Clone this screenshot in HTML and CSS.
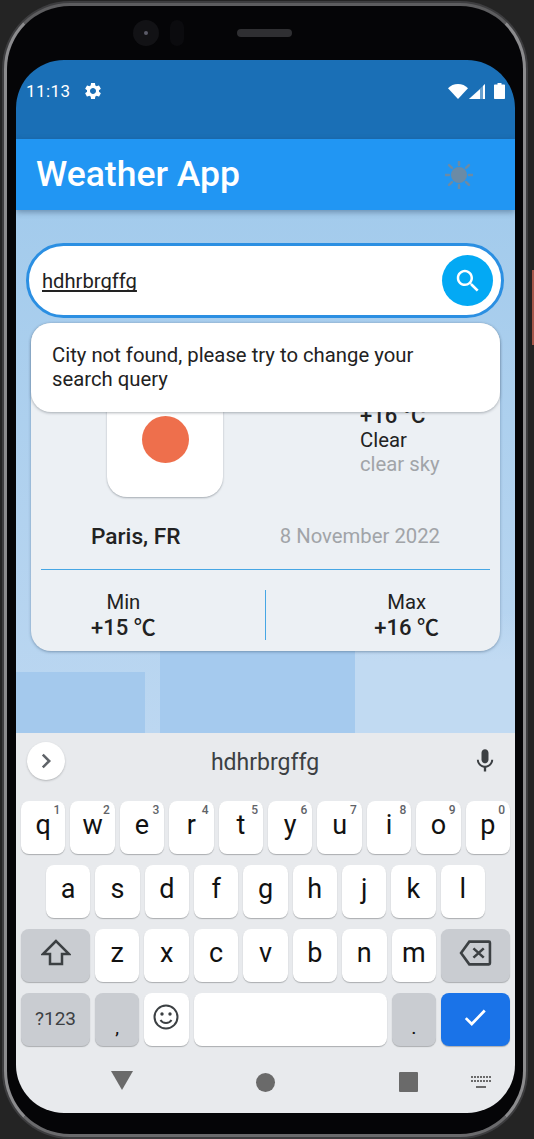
FILE: index.html
```html
<!DOCTYPE html>
<html>
    <head>
        <title>Weather App</title>
        <link rel="stylesheet" href="styles.css">
    </head>
    <body>
        <div class="side_button"></div>
        <div class="device">
            <div class="sensors">
                <div class="camera"><div class="lens"></div></div>
                <div class="sensor_pill"></div>
                <div class="speaker"></div>
            </div>
            <div class="screen">
                <div class="status_bar">
                    <span class="clock">11:13</span>
                    <svg class="gear" viewBox="0 0 24 24"><path d="M19.14 12.94c.04-.3.06-.61.06-.94 0-.32-.02-.64-.07-.94l2.03-1.58c.18-.14.23-.41.12-.61l-1.92-3.32c-.12-.22-.37-.29-.59-.22l-2.39.96c-.5-.38-1.03-.7-1.62-.94l-.36-2.54c-.04-.24-.24-.41-.48-.41h-3.84c-.24 0-.43.17-.47.41l-.36 2.54c-.59.24-1.13.57-1.62.94l-2.39-.96c-.22-.08-.47 0-.59.22L2.74 8.87c-.12.21-.08.47.12.61l2.03 1.58c-.05.3-.09.63-.09.94s.02.64.07.94l-2.03 1.58c-.18.14-.23.41-.12.61l1.92 3.32c.12.22.37.29.59.22l2.39-.96c.5.38 1.03.7 1.62.94l.36 2.54c.05.24.24.41.48.41h3.84c.24 0 .44-.17.47-.41l.36-2.54c.59-.24 1.13-.56 1.62-.94l2.39.96c.22.08.47 0 .59-.22l1.92-3.32c.12-.22.07-.47-.12-.61l-2.01-1.58zM12 15.6c-1.98 0-3.6-1.62-3.6-3.6s1.62-3.6 3.6-3.6 3.6 1.62 3.6 3.6-1.62 3.6-3.6 3.6z"/></svg>
                    <div class="status_icons">
                        <svg class="wifi" viewBox="0 0 20 15"><path d="M0 4.2C2.6 1.6 6.1 0 10 0s7.4 1.6 10 4.2L10 15z"/></svg>
                        <svg class="signal" viewBox="0 0 16 15"><path d="M16 0v15H0z" opacity=".35"/><path d="M11 5.2V15H0z"/><path d="M14 2v13h2V0z"/></svg>
                        <svg class="battery" viewBox="0 0 11 16"><path d="M3.5 0h4v1.5H10c.6 0 1 .4 1 1V15c0 .6-.4 1-1 1H1c-.6 0-1-.4-1-1V2.500c0-.6.4-1 1-1h2.500z"/></svg>
                    </div>
                </div>
                <header class="app_bar">
                    <h1>Weather App</h1>
                    <svg class="sun" viewBox="0 0 28 28">
                        <circle cx="14" cy="14" r="8"/>
                        <path class="rays" d="M14 0v4M14 24v4M0 14h4M24 14h4M4.100 4.100l2.800 2.800M21.100 21.100l2.800 2.800M4.100 23.900l2.800-2.800M21.100 6.900l2.800-2.800"/>
                    </svg>
                </header>
                <main class="content">
                    <div class="bg_block bg_left"></div>
                    <div class="bg_block bg_mid"></div>
                    <div class="bg_block bg_right"></div>

                    <div class="search_box">
                        <span class="search_text">hdhrbrgffg</span>
                        <div class="search_btn">
                            <svg viewBox="0 0 24 24"><path d="M15.500 14h-.79l-.28-.27C15.410 12.590 16 11.110 16 9.500 16 5.910 13.090 3 9.500 3S3 5.910 3 9.500 5.910 16 9.500 16c1.610 0 3.090-.59 4.230-1.570l.27.28v.79l5 4.990L20.490 19l-4.990-5zm-6 0C7.010 14 5 11.990 5 9.500S7.010 5 9.500 5 14 7.010 14 9.500 11.990 14 9.500 14z"/></svg>
                        </div>
                    </div>

                    <div class="weather_card">
                        <div class="weather_top">
                            <div class="icon_tile"><div class="icon_dot"></div></div>
                            <div class="weather_now">
                                <div class="temp_now">+16 °C</div>
                                <div class="cond">Clear</div>
                                <div class="cond_desc">clear sky</div>
                            </div>
                        </div>
                        <div class="place_row">
                            <span class="place">Paris, FR</span>
                            <span class="date">8 November 2022</span>
                        </div>
                        <div class="min_max">
                            <div class="mm_col">
                                <span class="mm_label">Min</span>
                                <span class="mm_value">+15 ℃</span>
                            </div>
                            <div class="mm_rule"></div>
                            <div class="mm_col">
                                <span class="mm_label">Max</span>
                                <span class="mm_value">+16 ℃</span>
                            </div>
                        </div>
                    </div>

                    <div class="snackbar">City not found, please try to change your search query</div>
                </main>
                <section class="keyboard">
                    <div class="suggest_row">
                        <div class="chevron_btn">
                            <svg viewBox="0 0 24 24"><path d="M8.500 5l7 7-7 7"/></svg>
                        </div>
                        <span class="suggest_word">hdhrbrgffg</span>
                        <svg class="mic" viewBox="0 0 24 24"><path d="M12 14c1.660 0 2.990-1.340 2.990-3L15 5c0-1.660-1.340-3-3-3S9 3.340 9 5v6c0 1.660 1.340 3 3 3zm5.300-3c0 3-2.540 5.100-5.300 5.100S6.700 14 6.700 11H5c0 3.410 2.720 6.230 6 6.720V21h2v-3.280c3.280-.48 6-3.300 6-6.720h-1.700z"/></svg>
                    </div>
                    <div class="key_row">
                        <div class="key">q<sup>1</sup></div>
                        <div class="key">w<sup>2</sup></div>
                        <div class="key">e<sup>3</sup></div>
                        <div class="key">r<sup>4</sup></div>
                        <div class="key">t<sup>5</sup></div>
                        <div class="key">y<sup>6</sup></div>
                        <div class="key">u<sup>7</sup></div>
                        <div class="key">i<sup>8</sup></div>
                        <div class="key">o<sup>9</sup></div>
                        <div class="key">p<sup>0</sup></div>
                    </div>
                    <div class="key_row row_home">
                        <div class="key">a</div>
                        <div class="key">s</div>
                        <div class="key">d</div>
                        <div class="key">f</div>
                        <div class="key">g</div>
                        <div class="key">h</div>
                        <div class="key">j</div>
                        <div class="key">k</div>
                        <div class="key">l</div>
                    </div>
                    <div class="key_row">
                        <div class="key key_wide key_grey">
                            <svg class="key_icon" viewBox="0 0 30 28"><path d="M15 2L2 15h7v10h12V15h7z"/></svg>
                        </div>
                        <div class="key">z</div>
                        <div class="key">x</div>
                        <div class="key">c</div>
                        <div class="key">v</div>
                        <div class="key">b</div>
                        <div class="key">n</div>
                        <div class="key">m</div>
                        <div class="key key_wide key_grey">
                            <svg class="key_icon key_back" viewBox="0 0 32 26"><path d="M10 2h19c.6 0 1 .4 1 1v20c0 .6-.4 1-1 1H10L2 13zM14 8.500l10 9M24 8.500l-10 9"/></svg>
                        </div>
                    </div>
                    <div class="key_row">
                        <div class="key key_wide key_grey key_sym">?123</div>
                        <div class="key key_grey key_punct">,</div>
                        <div class="key">
                            <svg class="key_icon smile" viewBox="0 0 28 28">
                                <circle cx="14" cy="14" r="11.500"/>
                                <circle class="eye" cx="10" cy="11" r="1.700"/>
                                <circle class="eye" cx="18" cy="11" r="1.700"/>
                                <path d="M8.500 17c1.200 2 3.200 3 5.500 3s4.300-1 5.500-3"/>
                            </svg>
                        </div>
                        <div class="key key_space"></div>
                        <div class="key key_grey key_punct">.</div>
                        <div class="key key_wide key_done">
                            <svg viewBox="0 0 24 24"><path d="M3.500 13l5.500 5.500L21 6"/></svg>
                        </div>
                    </div>
                    <div class="nav_bar">
                        <div class="nav_back"></div>
                        <div class="nav_home"></div>
                        <div class="nav_recent"></div>
                        <svg class="nav_kbd" viewBox="0 0 20 12">
                            <path d="M0 0h2v2H0zM3 0h2v2H3zM6 0h2v2H6zM9 0h2v2H9zM12 0h2v2h-2zM15 0h2v2h-2zM18 0h2v2h-2zM0 4h2v2H0zM3 4h2v2H3zM6 4h2v2H6zM9 4h2v2H9zM12 4h2v2h-2zM15 4h2v2h-2zM18 4h2v2h-2zM5 10h10v2H5z"/>
                        </svg>
                    </div>
                </section>
            </div>
        </div>
    </body>
</html>
```

FILE: styles.css
```css
*{
    box-sizing: border-box;
    font-family: Roboto, sans-serif;
}
html, body{
    height: 100%;
    margin: 0;
    overflow: hidden;
}
body{
    position: relative;
    padding: 3px 8px 2px 4px;
    background: #242424;
}
.side_button{
    position: absolute;
    top: 270px;
    right: 0;
    width: 2px;
    height: 75px;
    background: #a5574a;
}
.device{
    height: 1134px;
    padding: 0 8px 0 9px;
    background: #050507;
    border: 3px solid #8b8b8d;
    border-top-color: #5d5d5f;
    border-bottom-color: #6a6a6c;
    border-radius: 66px;
    box-shadow: 0 0 0 2px #3d3d3f;
}

/* top of the phone */
.sensors{
    display: flex;
    align-items: center;
    height: 54px;
    padding: 0 0 0 117px;
}
.camera{
    display: flex;
    align-items: center;
    justify-content: center;
    width: 26px;
    height: 26px;
    border-radius: 50%;
    background: #121215;
}
.lens{
    width: 4px;
    height: 4px;
    border-radius: 50%;
    background: #5c5c68;
}
.sensor_pill{
    width: 14px;
    height: 26px;
    margin-left: 11px;
    border-radius: 7px;
    background: #0b0b0e;
}
.speaker{
    width: 55px;
    height: 8px;
    margin-left: 53px;
    border-radius: 4px;
    background: #2f2f32;
}
.screen{
    display: flex;
    flex-direction: column;
    height: 1053px;
    overflow: hidden;
    border-radius: 48px;
}

/* status bar */
.status_bar{
    display: flex;
    align-items: center;
    flex: none;
    height: 79px;
    padding: 20px 10px 37px 10px;
    background: #1a6fb6;
    color: #FFF;
}
.clock{
    font-size: 17px;
    letter-spacing: .4px;
}
.gear{
    width: 20px;
    height: 20px;
    margin-left: 13px;
    fill: #FFF;
}
.status_icons{
    display: flex;
    align-items: center;
    margin-left: auto;
    fill: #FFF;
}
.wifi{
    width: 20px;
    height: 15px;
}
.signal{
    width: 16px;
    height: 15px;
    margin: 0 9px 0 1px;
}
.battery{
    width: 11px;
    height: 16px;
}

/* app bar */
.app_bar{
    position: relative;
    z-index: 2;
    display: flex;
    align-items: center;
    justify-content: space-between;
    flex: none;
    height: 71px;
    padding: 0 42px 0 20px;
    background: #2196f3;
    box-shadow: 0 2px 6px rgba(30, 60, 90, .45);
}
h1{
    margin: 0 0 1px 0;
    font-size: 35.5px;
    font-weight: 500;
    color: #FFF;
}
.sun{
    width: 28px;
    height: 28px;
    fill: #6b8ba6;
}
.rays{
    fill: none;
    stroke: #6b8ba6;
    stroke-width: 2.500;
    stroke-linecap: round;
}

/* page under the app bar */
.content{
    position: relative;
    flex: 1;
    padding: 33px 11px 0 10px;
    background: linear-gradient(#a3cbec, #bcd7f1);
}
.bg_block{
    position: absolute;
    bottom: 0;
}
.bg_left{
    left: 0;
    width: 129px;
    height: 61px;
    background: #a4c9ed;
}
.bg_mid{
    left: 144px;
    width: 195px;
    height: 220px;
    background: #a5caee;
}
.bg_right{
    left: 339px;
    right: 0;
    height: 120px;
    background: linear-gradient(transparent, #c1daf2 40%);
}
.search_box{
    position: relative;
    display: flex;
    align-items: center;
    justify-content: space-between;
    height: 75px;
    padding: 0 8px 0 13px;
    background: #FFF;
    border: 3px solid #2b8fe2;
    border-radius: 38px;
}
.search_text{
    font-size: 20.2px;
    color: #222;
    text-decoration: underline;
    text-decoration-skip-ink: none;
}
.search_btn{
    display: flex;
    align-items: center;
    justify-content: center;
    width: 51px;
    height: 51px;
    border-radius: 50%;
    background: #03a9f4;
}
.search_btn svg{
    width: 30px;
    height: 30px;
    fill: #FFF;
}
.snackbar{
    position: absolute;
    top: 113px;
    left: 15px;
    width: 469px;
    height: 89px;
    padding: 20px 60px 0 21px;
    background: #FFF;
    border-radius: 20px;
    box-shadow: 0 1px 3px rgba(60, 70, 80, .4);
    font-size: 20.3px;
    line-height: 24px;
    color: #222;
}

/* weather card */
.weather_card{
    position: relative;
    height: 328px;
    margin: 5px 4px 0 5px;
    padding-top: 58px;
    background: #ecf0f4;
    border-radius: 20px;
    box-shadow: 0 1px 3px rgba(60, 90, 120, .5);
}
.weather_top{
    display: flex;
    height: 116px;
    padding-left: 76px;
}
.icon_tile{
    display: flex;
    align-items: center;
    justify-content: center;
    width: 116px;
    height: 116px;
    background: #FFF;
    border-radius: 20px;
    box-shadow: 0 1px 2px rgba(60, 70, 80, .4);
}
.icon_dot{
    width: 47px;
    height: 47px;
    border-radius: 50%;
    background: #ee6f4c;
}
.weather_now{
    margin: 23px 0 0 137px;
    font-size: 20.3px;
    line-height: 24px;
    color: #222;
}
.temp_now{
    font-size: 22px;
    font-weight: 500;
}
.cond_desc{
    color: #a1a4a8;
}
.place_row{
    display: flex;
    justify-content: space-between;
    align-items: center;
    height: 73px;
    margin: 0 10px;
    padding: 6px 50px 0 50px;
    border-bottom: 1px solid #46a6e4;
}
.place{
    font-size: 22.7px;
    font-weight: 500;
    color: #222;
}
.date{
    font-size: 20.3px;
    color: #a1a4a8;
}
.min_max{
    display: flex;
    justify-content: space-between;
    align-items: center;
    height: 80px;
    padding: 10px 61px 0 60px;
}
.mm_col{
    display: flex;
    flex-direction: column;
    align-items: center;
    color: #222;
}
.mm_label{
    font-size: 20.3px;
    line-height: 26px;
}
.mm_value{
    font-family: Roboto, "Noto Sans CJK SC", sans-serif;
    font-size: 22px;
    font-weight: 500;
    line-height: 26px;
}
.mm_rule{
    width: 1px;
    height: 50px;
    background: #46a6e4;
}

/* keyboard */
.keyboard{
    flex: none;
    height: 380px;
    padding: 0 5px;
    background: #e8eaed;
}
.suggest_row{
    display: flex;
    align-items: center;
    justify-content: space-between;
    height: 68px;
    padding: 0 11px 12px 6px;
}
.chevron_btn{
    display: flex;
    align-items: center;
    justify-content: center;
    width: 38px;
    height: 38px;
    border-radius: 50%;
    background: #FFF;
    box-shadow: 0 1px 2px rgba(60, 64, 67, .3);
}
.chevron_btn svg{
    width: 22px;
    height: 22px;
    fill: none;
    stroke: #5f6368;
    stroke-width: 2.800;
}
.suggest_word{
    margin: 2px 6px 0 0;
    font-size: 23px;
    color: #3c4043;
}
.mic{
    width: 28px;
    height: 28px;
    fill: #3c4043;
}
.key_row{
    display: flex;
    gap: 5px;
    height: 53px;
    margin-bottom: 11px;
}
.row_home{
    padding: 0 25px;
}
.key{
    position: relative;
    display: flex;
    align-items: center;
    justify-content: center;
    flex: 1;
    padding-bottom: 5px;
    background: #FFF;
    border-radius: 8px;
    box-shadow: 0 1px 1px rgba(60, 64, 67, .35);
    font-size: 27px;
    color: #111;
}
.key sup{
    position: absolute;
    top: 2px;
    right: 5px;
    font-size: 12px;
    font-weight: 500;
    line-height: 14px;
    color: #5f6368;
}
.key_wide{
    flex: none;
    width: 69px;
}
.key_grey{
    background: #c9ccd1;
}
.key_space{
    flex: none;
    width: 193px;
}
.key_sym{
    padding-bottom: 3px;
    font-size: 19px;
    color: #3c4043;
}
.key_punct{
    align-items: flex-end;
    padding-bottom: 8px;
    font-size: 17px;
    font-weight: 500;
}
.key_icon{
    width: 30px;
    height: 28px;
    fill: none;
    stroke: #3c4043;
    stroke-width: 2.500;
}
.key_back{
    width: 33px;
}
.smile{
    stroke-width: 2;
}
.eye{
    fill: #3c4043;
    stroke: none;
}
.key_done{
    background: #1a73e8;
}
.key_done svg{
    width: 26px;
    height: 26px;
    fill: none;
    stroke: #FFF;
    stroke-width: 2.500;
}
.nav_bar{
    position: relative;
    display: flex;
    align-items: center;
    height: 66px;
    margin-top: -11px;
    padding: 6px 0 0 90px;
}
.nav_back{
    width: 0;
    height: 0;
    border-left: 11px solid transparent;
    border-right: 11px solid transparent;
    border-top: 19px solid #6a6a6a;
    margin-bottom: 3px;
}
.nav_home{
    width: 19px;
    height: 19px;
    margin-left: 123px;
    border-radius: 50%;
    background: #6a6a6a;
}
.nav_recent{
    width: 19px;
    height: 20px;
    margin-left: 124px;
    border-radius: 1px;
    background: #6a6a6a;
}
.nav_kbd{
    width: 20px;
    height: 12px;
    margin-left: 53px;
    fill: #6a6a6a;
}
```
